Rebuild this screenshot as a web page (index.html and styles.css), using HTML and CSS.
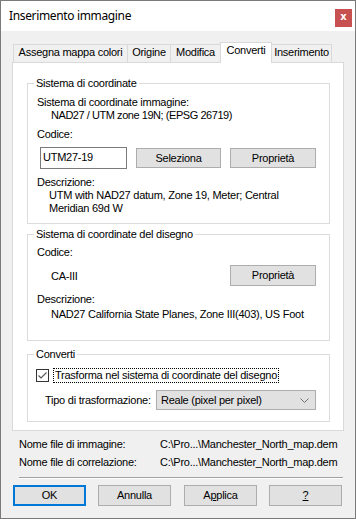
FILE: index.html
```html
<!DOCTYPE html>
<html>
<head>
<meta charset="utf-8">
<link rel="stylesheet" href="styles.css">
</head>
<body>
<div class="window">
  <div class="titlebar">
    <div class="title">Inserimento immagine</div>
    <div class="close">x</div>
  </div>
  <div class="content">
    <div class="tabs">
      <div class="tab t1">Assegna mappa colori</div>
      <div class="tab t2">Origine</div>
      <div class="tab t3">Modifica</div>
      <div class="tab t4 active">Converti</div>
      <div class="tab t5">Inserimento</div>
    </div>
    <div class="panel">
      <div class="group g1">
        <div class="legend">Sistema di coordinate</div>
        <div class="line mt6">Sistema di coordinate immagine:</div>
        <div class="line ind14 tight">NAD27 / UTM zone 19N; (EPSG 26719)</div>
        <div class="line mt6">Codice:</div>
        <div class="row r1">
          <div class="input">UTM27-19</div>
          <div class="btn b-sel">Seleziona</div>
          <div class="btn b-prop1">Proprietà</div>
        </div>
        <div class="line mt7">Descrizione:</div>
        <div class="line ind12">UTM with NAD27 datum, Zone 19, Meter; Central</div>
        <div class="line ind12">Meridian 69d W</div>
      </div>
      <div class="group g2">
        <div class="legend">Sistema di coordinate del disegno</div>
        <div class="line mt5">Codice:</div>
        <div class="row r2">
          <div class="code ind14">CA-III</div>
          <div class="btn b-prop2">Proprietà</div>
        </div>
        <div class="line mt7">Descrizione:</div>
        <div class="line ind14 mt2">NAD27 California State Planes, Zone III(403), US Foot</div>
      </div>
      <div class="group g3">
        <div class="legend">Converti</div>
        <div class="row r3">
          <div class="checkbox">
            <svg width="11" height="11" viewBox="0 0 11 11"><polyline points="1.5,5.5 4,8 9.5,2.5" fill="none" stroke="#5a5a5a" stroke-width="1.2"/></svg>
          </div>
          <div class="focus">Trasforma nel sistema di coordinate del disegno</div>
        </div>
        <div class="row r4">
          <div class="tlabel">Tipo di trasformazione:</div>
          <div class="combo">
            <span>Reale (pixel per pixel)</span>
            <svg width="9" height="5" viewBox="0 0 9 5"><polyline points="0.5,0.5 4.5,4.5 8.5,0.5" fill="none" stroke="#707070" stroke-width="1"/></svg>
          </div>
        </div>
      </div>
    </div>
    <div class="files">
      <div class="frow"><span class="fl">Nome file di immagine:</span><span>C:\Pro...\Manchester_North_map.dem</span></div>
      <div class="frow"><span class="fl">Nome file di correlazione:</span><span>C:\Pro...\Manchester_North_map.dem</span></div>
    </div>
    <div class="sep"></div>
    <div class="buttons">
      <div class="btn dbtn ok">OK</div>
      <div class="btn dbtn b2">Annulla</div>
      <div class="btn dbtn b3">A<u>p</u>plica</div>
      <div class="btn dbtn b4"><u>?</u></div>
    </div>
  </div>
</div>
</body>
</html>
```
FILE: styles.css
```css
* { box-sizing: border-box; }
html, body { margin: 0; padding: 0; }
body {
  width: 356px;
  height: 519px;
  overflow: hidden;
  background: #f0f0f0;
  font-family: "Liberation Sans", Arial, sans-serif;
  font-size: 11px;
  letter-spacing: -0.25px;
  color: #000;
}
.window {
  width: 356px;
  height: 519px;
  border: 1px solid #7a7a7a;
  display: flex;
  flex-direction: column;
  background: #f0f0f0;
}
.titlebar {
  height: 30px;
  flex: none;
  background: #fff;
  display: flex;
  justify-content: space-between;
  align-items: flex-start;
}
.title {
  font-family: "Noto Sans", "Open Sans", sans-serif;
  font-size: 12px;
  letter-spacing: -0.35px;
  line-height: 16px;
  margin: 7px 0 0 8px;
}
.close {
  width: 17px;
  height: 18px;
  margin: 8px 3px 0 0;
  background: #c75050;
  color: #fff;
  font-family: "DejaVu Sans", sans-serif;
  font-weight: bold;
  font-size: 10px;
  letter-spacing: 0;
  display: flex;
  align-items: center;
  justify-content: center;
  line-height: 1;
  padding-bottom: 2px;
}
.content {
  flex: 1;
  padding: 11px 11px 0 11px;
  display: flex;
  flex-direction: column;
}
.tabs {
  display: flex;
  align-items: flex-end;
  height: 21px;
  margin-left: 1px;
  margin-bottom: -1px;
  position: relative;
  z-index: 1;
}
.tab {
  height: 18px;
  margin-bottom: 1px;
  margin-left: -1px;
  border: 1px solid #d9d9d9;
  border-bottom: none;
  background: #f0f0f0;
  text-align: center;
  line-height: 15px;
  white-space: nowrap;
}
.tab.t1 { margin-left: 0; width: 115px; }
.tab.t2 { width: 44px; }
.tab.t3 { width: 51px; }
.tab.t4 { width: 52px; }
.tab.t5 { width: 61px; }
.tab.active {
  height: 21px;
  margin-bottom: 0;
  background: #fff;
  line-height: 15px;
}
.panel {
  width: 332px;
  height: 369px;
  flex: none;
  background: #fff;
  border: 1px solid #d9d9d9;
  padding: 20px 13px 0 14px;
}
.group {
  border: 1px solid #dcdcdc;
  padding: 0 13px 0 9px;
}
.g1 { height: 141px; }
.g2 { height: 107px; margin-top: 10px; }
.g3 { height: 68px; margin-top: 13px; }
.legend {
  width: fit-content;
  margin: -7px 0 0 -3px;
  padding: 0 2px;
  background: #fff;
  line-height: 13px;
}
.line { line-height: 13px; white-space: nowrap; }
.tight { letter-spacing: -0.45px; }
.mt2 { margin-top: 2px; }
.mt5 { margin-top: 5px; }
.mt6 { margin-top: 6px; }
.mt7 { margin-top: 7px; }
.ind14 { padding-left: 14px; }
.ind12 { padding-left: 12px; }
.row { display: flex; align-items: center; }
.r1 { height: 22px; margin-top: 6px; }
.input {
  width: 87px;
  height: 22px;
  margin-left: 3px;
  border: 1px solid #7a7a7a;
  background: #fff;
  padding: 3px 0 0 2px;
  line-height: 13px;
}
.btn {
  height: 20px;
  background: #e1e1e1;
  border: 1px solid #adadad;
  display: flex;
  align-items: center;
  justify-content: center;
  line-height: 13px;
}
.b-sel { width: 85px; margin-left: 9px; }
.b-prop1 { width: 86px; margin-left: 9px; }
.r2 { height: 21px; margin-top: 6px; justify-content: space-between; }
.b-prop2 { width: 86px; height: 21px; }
.r3 { height: 15px; margin-top: 7px; }
.checkbox {
  width: 13px;
  height: 13px;
  margin-left: -1px;
  border: 1px solid #333;
  background: #fff;
  display: flex;
  align-items: center;
  justify-content: center;
}
.checkbox svg { display: block; }
.focus {
  margin-left: 4px;
  height: 15px;
  padding: 0 1px;
  border: 1px dotted #000;
  line-height: 13px;
  white-space: nowrap;
}
.r4 { height: 20px; margin-top: 7px; justify-content: space-between; }
.tlabel { padding-left: 8px; line-height: 13px; }
.combo {
  width: 160px;
  height: 20px;
  background: #e1e1e1;
  border: 1px solid #adadad;
  display: flex;
  align-items: center;
  justify-content: space-between;
  padding: 0 6px 0 4px;
  line-height: 13px;
}
.combo svg { display: block; }
.files { margin-top: 4px; padding-left: 7px; }
.frow { display: flex; line-height: 18px; white-space: nowrap; }
.fl { width: 141px; }
.sep {
  margin: 6px 0 0 7px;
  width: 324px;
  height: 2px;
  border-top: 1px solid #a0a0a0;
  border-bottom: 1px solid #fff;
}
.buttons { display: flex; margin-top: 6px; }
.dbtn { width: 73px; height: 21px; }
.ok { margin-left: 1px; border: 2px solid #0078d7; }
.b2 { margin-left: 12px; }
.b3 { margin-left: 13px; }
.b4 { margin-left: 12px; }
```
